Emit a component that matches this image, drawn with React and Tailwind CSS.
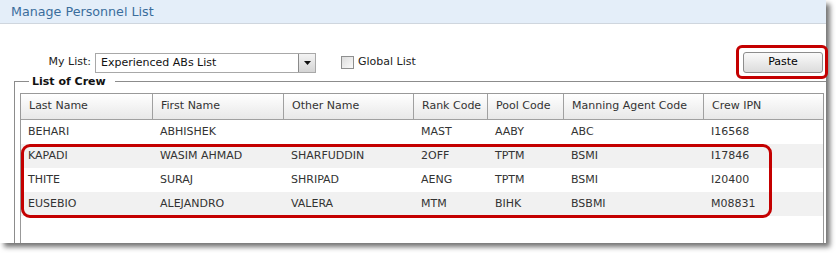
import React from "react";

const columns = [
  { label: "Last Name", w: "w-[132px]" },
  { label: "First Name", w: "w-[131px]" },
  { label: "Other Name", w: "w-[130px]" },
  { label: "Rank Code", w: "w-[74px]" },
  { label: "Pool Code", w: "w-[76px]" },
  { label: "Manning Agent Code", w: "w-[140px]" },
  { label: "Crew IPN", w: "w-[119px]" },
];

const crew = [
  ["BEHARI", "ABHISHEK", "", "MAST", "AABY", "ABC", "I16568"],
  ["KAPADI", "WASIM AHMAD", "SHARFUDDIN", "2OFF", "TPTM", "BSMI", "I17846"],
  ["THITE", "SURAJ", "SHRIPAD", "AENG", "TPTM", "BSMI", "I20400"],
  ["EUSEBIO", "ALEJANDRO", "VALERA", "MTM", "BIHK", "BSBMI", "M08831"],
];

export default function App() {
  return (
    <div className="w-[836px] h-[253px] bg-white font-['DejaVu_Sans',Verdana,sans-serif] text-[11px] text-[#222]">
      <div className="w-[826px] h-[243px] bg-white shadow-[4px_4px_5px_rgba(0,0,0,0.55)] flex flex-col overflow-visible">
        {/* Title bar */}
        <div className="h-[24px] shrink-0 bg-[#e4eef9] border-b border-[#cfd6de] pl-[11px] flex items-center text-[12.7px] text-[#3a6d9c]">
          Manage Personnel List
        </div>

        {/* Controls */}
        <div className="flex items-center pt-[28px] h-[49px] shrink-0">
          <span className="w-[91px] text-right text-[#222]">My List:</span>
          <div className="ml-[4px] w-[221px] h-[20px] flex border border-[#a8a8a8] bg-white">
            <span className="flex-1 pl-[5px] leading-[18px] text-[#111]">Experienced ABs List</span>
            <span className="w-[17px] h-[18px] flex items-center justify-center border-l border-[#8a8a8a] bg-gradient-to-b from-[#f4f4f4] to-[#d4d4d4]">
              <svg width="7" height="4" viewBox="0 0 7 4">
                <path d="M0 0h7L3.5 4z" fill="#111" />
              </svg>
            </span>
          </div>
          <span className="ml-[25px] w-[13px] h-[13px] border border-[#8e8f8f] bg-gradient-to-br from-[#dcdcdc] to-[#fbfbfb]" />
          <span className="ml-[4px] text-[#222]">Global List</span>
          <div className="ml-auto mr-[3px] relative">
            <button className="w-[80px] h-[21px] rounded-[3px] border border-[#8d8d8d] bg-gradient-to-b from-[#fafafa] to-[#dcdcdc] text-[11px] text-black font-['DejaVu_Sans',Verdana,sans-serif]">
              Paste
            </button>
            <div className="absolute -left-[7px] -top-[7px] w-[92px] h-[34px] border-[3px] border-[#c40000] rounded-[6px]" />
          </div>
        </div>

        {/* List of Crew */}
        <fieldset className="ml-[14px] mt-[2px] flex-1 min-h-0 border-l border-t border-[#8c8c8c] pl-[5px] pt-[5px] flex flex-col">
          <legend className="ml-[9px] pl-[3px] pr-[9px] font-bold text-[11px] leading-[13px] text-[#111]">
            List of Crew
          </legend>
          <div className="w-[804px] flex-1 border-l border-r border-t border-[#999] bg-white flex flex-col">
            <div className="flex h-[26px] shrink-0 border-b border-[#a0a0a0] bg-gradient-to-b from-[#ffffff] to-[#e8e8e8]">
              {columns.map((c, i) => (
                <div
                  key={c.label}
                  className={`${c.w} pl-[8px] flex items-center text-[#333] ${i < columns.length - 1 ? "border-r border-[#a0a0a0]" : ""}`}
                >
                  {c.label}
                </div>
              ))}
            </div>
            <div className="relative">
              {crew.map((row, r) => (
                <div key={r} className={`flex h-[24px] ${r % 2 === 1 ? "bg-[#f1f1f1]" : "bg-white"}`}>
                  {row.map((cell, i) => (
                    <div key={i} className={`${columns[i].w} pl-[7px] flex items-center text-[#333]`}>
                      {cell}
                    </div>
                  ))}
                </div>
              ))}
              <div className="absolute left-0 top-[24px] w-[751px] h-[74px] border-[3px] border-[#c40000] rounded-[9px]" />
            </div>
          </div>
        </fieldset>
      </div>
    </div>
  );
}
